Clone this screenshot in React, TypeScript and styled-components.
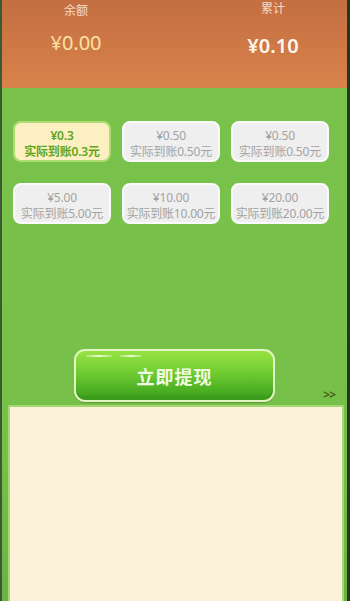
import React from 'react';
import styled, { createGlobalStyle } from 'styled-components';

const GlobalStyle = createGlobalStyle`
  html, body {
    margin: 0;
    padding: 0;
    background: #2f4429;
  }
  body {
    font-family: "Noto Sans", "Noto Sans CJK SC", sans-serif;
  }
`;

interface Option {
  amount: string;
  actual: string;
}

const options: Option[] = [
  { amount: '¥0.3', actual: '实际到账0.3元' },
  { amount: '¥0.50', actual: '实际到账0.50元' },
  { amount: '¥0.50', actual: '实际到账0.50元' },
  { amount: '¥5.00', actual: '实际到账5.00元' },
  { amount: '¥10.00', actual: '实际到账10.00元' },
  { amount: '¥20.00', actual: '实际到账20.00元' },
];

const App: React.FC = () => {
  const selected = 0;
  return (
    <Page>
      <GlobalStyle />
      <Header>
        <Stat $top={3} $gap={11}>
          <span className="label">余额</span>
          <Value $color="#fde2a2" $weight={400}>¥0.00</Value>
        </Stat>
        <Stat $top={1} $gap={16}>
          <span className="label">累计</span>
          <Value $color="#fff7ee" $weight={600}>¥0.10</Value>
        </Stat>
      </Header>
      <Body>
        <Grid>
          {options.map((o, i) => (
            <Card key={i} $active={i === selected}>
              <span>{o.amount}</span>
              <span>{o.actual}</span>
            </Card>
          ))}
        </Grid>
        <ButtonRow>
          <span />
          <WithdrawButton>
            <i className="shine a" />
            <i className="shine b" />
            立即提现
          </WithdrawButton>
          <More>&gt;&gt;</More>
        </ButtonRow>
        <Panel />
      </Body>
    </Page>
  );
};

const Page = styled.div`
  width: 345px;
  height: 601px;
  overflow: hidden;
  border-left: 2px solid #3b5a33;
  border-right: 3px solid #26361f;
  display: flex;
  flex-direction: column;
`;

const Header = styled.div`
  height: 88px;
  flex-shrink: 0;
  background: linear-gradient(180deg, #c46f41 0%, #d07a47 60%, #d9824b 100%);
  display: flex;
  justify-content: space-between;
  padding: 0 22px 0 22px;
`;

const Stat = styled.div<{ $top: number; $gap: number }>`
  width: 104px;
  display: flex;
  flex-direction: column;
  align-items: center;
  padding-top: ${({ $top }) => $top}px;
  gap: ${({ $gap }) => $gap}px;
  .label {
    font-size: 12px;
    line-height: 16px;
    color: #f7dcc6;
  }
`;

const Value = styled.span<{ $color: string; $weight: number }>`
  font-size: 20px;
  line-height: 26px;
  color: ${({ $color }) => $color};
  font-weight: ${({ $weight }) => $weight};
`;

const Body = styled.div`
  flex: 1;
  background: linear-gradient(180deg, #79c34c 0%, #76c04a 70%, #6db244 100%);
  display: flex;
  flex-direction: column;
  padding-top: 33px;
`;

const Grid = styled.div`
  display: grid;
  grid-template-columns: repeat(3, 98px);
  column-gap: 11px;
  row-gap: 21px;
  padding-left: 11px;
`;

const Card = styled.div<{ $active: boolean }>`
  box-sizing: border-box;
  height: 41px;
  border-radius: 8px;
  padding-top: 5px;
  display: flex;
  flex-direction: column;
  align-items: center;
  font-size: 12px;
  line-height: 16px;
  background: ${({ $active }) => ($active ? '#fcefc1' : '#efefef')};
  border: 2px solid ${({ $active }) => ($active ? '#aedc72' : '#fafafa')};
  color: ${({ $active }) => ($active ? '#62a620' : '#a3a3a3')};
  font-weight: ${({ $active }) => ($active ? 600 : 400)};
  white-space: nowrap;
  letter-spacing: -0.2px;
`;

const ButtonRow = styled.div`
  margin-top: 125px;
  display: grid;
  grid-template-columns: 1fr 201px 1fr;
  align-items: end;
`;

const WithdrawButton = styled.button`
  position: relative;
  box-sizing: border-box;
  height: 53px;
  border-radius: 11px;
  border: 2px solid #e4f5c4;
  background: linear-gradient(180deg, #97e243 0%, #6fcc31 45%, #44a920 88%, #2f8c16 100%);
  box-shadow: inset 0 -3px 0 #3c9a1c, 0 1px 0 #5a9a36;
  color: #f0fbe2;
  font-family: "Noto Sans CJK SC", sans-serif;
  font-size: 18px;
  font-weight: 600;
  letter-spacing: 1px;
  padding: 0;
  .shine {
    position: absolute;
    top: 4px;
    height: 2px;
    border-radius: 1px;
    background: linear-gradient(90deg, rgba(240, 255, 220, 0.3), rgba(240, 255, 220, 0.9), rgba(240, 255, 220, 0.3));
  }
  .a {
    left: 10px;
    width: 26px;
  }
  .b {
    left: 44px;
    width: 22px;
  }
`;

const More = styled.span`
  justify-self: end;
  margin-right: 12px;
  margin-bottom: 2px;
  font-size: 12px;
  font-weight: 700;
  line-height: 10px;
  color: #4a5e16;
  letter-spacing: -1px;
`;

const Panel = styled.div`
  margin: 3px 3px 0 6px;
  flex: 1;
  background: #fbf2d9;
  border: 2px solid #a5d774;
  border-bottom: none;
`;

export default App;
